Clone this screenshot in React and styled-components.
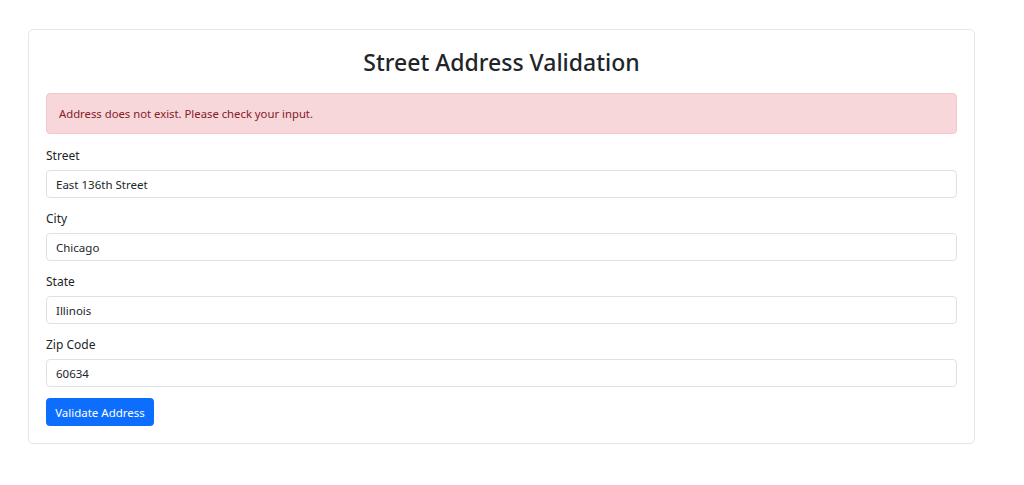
import React, { useState } from 'react';
import styled, { createGlobalStyle } from 'styled-components';

const GlobalStyle = createGlobalStyle`
body {
    margin: 0;
    background: #fff;
    font-family: "Noto Sans", "Open Sans", sans-serif;
    color: #212529;
}
`;

function App() {
    const [form, setForm] = useState({
        street: 'East 136th Street',
        city: 'Chicago',
        state: 'Illinois',
        zip: '60634',
    });

    const fields = [
        { key: 'street', label: 'Street' },
        { key: 'city', label: 'City' },
        { key: 'state', label: 'State' },
        { key: 'zip', label: 'Zip Code' },
    ];

    const onChange = (key) => (e) => setForm({ ...form, [key]: e.target.value });

    return <Page>
        <GlobalStyle />
        <Card>
            <Title>Street Address Validation</Title>
            <Alert>Address does not exist. Please check your input.</Alert>
            {fields.map((f) =>
                <Field key={f.key}>
                    <Label htmlFor={f.key}>{f.label}</Label>
                    <Input id={f.key} value={form[f.key]} onChange={onChange(f.key)} />
                </Field>
            )}
            <Button>Validate Address</Button>
        </Card>
    </Page>
}
export default App;


const Page = styled.div`
padding: 29px 48px 40px 28px;
`;

const Card = styled.div`
width: 947px;
box-sizing: border-box;
border: 1px solid #e4e6e8;
border-radius: 5px;
background: #fff;
padding: 17px;

display: flex;
flex-direction: column;
`;

const Title = styled.h2`
margin: 0 0 16px 0;
text-align: center;
font-size: 23px;
font-weight: 500;
line-height: 30px;
color: #212529;
`;

const Alert = styled.div`
height: 41px;
box-sizing: border-box;
border: 1px solid #f5c6cb;
border-radius: 4px;
background: #f8d7da;
color: #842029;
padding: 0 12px;

display: flex;
align-items: center;

font-size: 11.3px;
margin-bottom: 13px;
`;

const Field = styled.div`
display: flex;
flex-direction: column;
margin-bottom: 12px;
`;

const Label = styled.label`
font-size: 12px;
line-height: 18px;
margin-bottom: 5px;
color: #212529;
`;

const Input = styled.input`
height: 28px;
box-sizing: border-box;
border: 1px solid #dee2e6;
border-radius: 4px;
padding: 0 9px;
font-family: inherit;
font-size: 11.5px;
color: #212529;
outline: none;
`;

const Button = styled.button`
align-self: flex-start;
width: 108px;
height: 28px;
margin-top: -1px;
border: none;
border-radius: 4px;
background: #0d6efd;
color: #fff;
font-family: inherit;
font-size: 11.5px;
cursor: pointer;
`;
